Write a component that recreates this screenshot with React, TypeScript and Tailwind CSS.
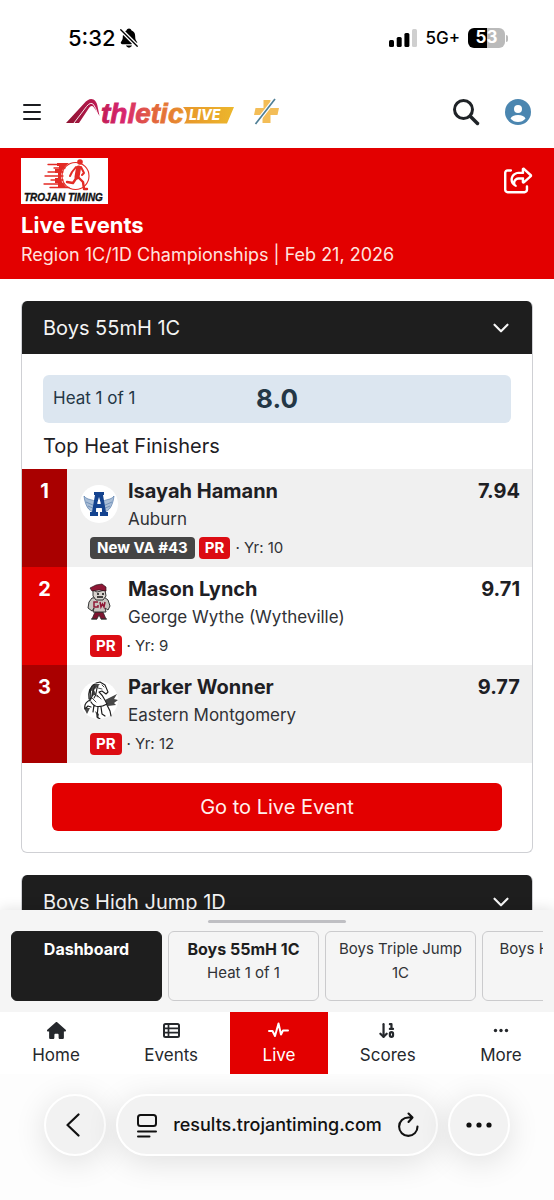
import React from 'react';
import { FaHouse, FaRegShareFromSquare } from 'react-icons/fa6';
import { IoNotificationsOff } from 'react-icons/io5';
import { ArrowDown10, ChevronDown } from 'lucide-react';

function StatusBar() {
  return (
    <div className="flex h-[76px] items-center justify-between pl-[68px] pr-[46px] text-black">
      <div className="flex items-center gap-[2px]">
        <span className="text-[22px] font-medium leading-7">5:32</span>
        <IoNotificationsOff size={22} />
      </div>
      <div className="flex items-center gap-2">
        <svg width="28" height="18" viewBox="0 0 28 18" aria-hidden="true">
          <rect x="0" y="11" width="5" height="7" rx="1.5" />
          <rect x="7.7" y="8" width="5" height="10" rx="1.5" />
          <rect x="15.4" y="4" width="5" height="14" rx="1.5" />
          <rect x="23" y="0" width="5" height="18" rx="1.5" fill="#cfcfcf" />
        </svg>
        <span className="text-[17px] font-medium leading-6">5G+</span>
        <div className="flex items-center gap-px">
          <div className="flex h-5 w-[37px] items-center justify-center rounded-md bg-linear-to-r from-black from-52% to-[#bababa] to-52% text-[17px] font-bold text-white">
            53
          </div>
          <div className="h-[7px] w-[2px] rounded-r-full bg-[#bababa]"></div>
        </div>
      </div>
    </div>
  );
}

function AthleticLogo() {
  return (
    <svg width="168" height="28" viewBox="0 0 168 28" role="img" aria-label="Athletic LIVE">
      <defs>
        <linearGradient id="brand" gradientUnits="userSpaceOnUse" x1="0" y1="0" x2="118" y2="0">
          <stop offset="0" stopColor="#8c1230" />
          <stop offset="0.28" stopColor="#c01c55" />
          <stop offset="0.5" stopColor="#d8276f" />
          <stop offset="0.72" stopColor="#e2603f" />
          <stop offset="1" stopColor="#e8932c" />
        </linearGradient>
        <linearGradient id="banner" x1="0" x2="1">
          <stop offset="0" stopColor="#e8962b" />
          <stop offset="1" stopColor="#ecb72c" />
        </linearGradient>
      </defs>
      <path d="M0 25 18 5.500Q23 -.5 27.500 1.500Q30.500 3 31.500 8L33.500 18 28 9.500Q25.500 6.500 23 10L13 25Z" fill="url(#brand)" />
      <path d="M8 25 20.500 8.500Q24.500 3.500 27.500 6.500Q29.500 9 32 17" fill="none" stroke="#fff" strokeWidth="0.9" />
      <path d="M117 9H168L161 25.500H118C122 21 122 14 117 9Z" fill="url(#banner)" />
      <text x="35" y="25" fontFamily="Liberation Sans, sans-serif" fontSize="28" fontWeight="700" fontStyle="italic" fill="url(#brand)" stroke="url(#brand)" strokeWidth="0.8">
        thletic
      </text>
      <text x="123" y="22" fontFamily="Inter, sans-serif" fontSize="14" fontWeight="800" fontStyle="italic" fill="#fff">
        LIVE
      </text>
    </svg>
  );
}

function PlusLogo() {
  return (
    <svg width="26" height="28" viewBox="0 0 26 28" aria-hidden="true">
      <path d="M9.500 2H16.500V10H25L23.500 17H16.500V25H8.500V17H0L1.500 10H9.500Z" fill="#f3bd57" />
      <path d="M1.500 26 21 1" stroke="#fff" strokeWidth="4" />
      <path d="M1.500 26 21 1" stroke="#4f7f96" strokeWidth="1.700" />
    </svg>
  );
}

function SiteHeader() {
  return (
    <header className="flex h-[72px] items-center pl-[23px] pr-[22px]">
      <button aria-label="Menu" className="flex w-[18px] flex-col gap-[5px]">
        <span className="h-[2px] w-full rounded-full bg-[#1b1c20]"></span>
        <span className="h-[2px] w-full rounded-full bg-[#1b1c20]"></span>
        <span className="h-[2px] w-full rounded-full bg-[#1b1c20]"></span>
      </button>
      <a href="#home" className="ml-[25px]">
        <AthleticLogo />
      </a>
      <a href="#plus" aria-label="Plus" className="ml-5">
        <PlusLogo />
      </a>
      <button aria-label="Search" className="ml-auto">
        <svg width="28" height="28" viewBox="0 0 28 28" fill="none" stroke="#1f2327" strokeLinecap="round" aria-hidden="true">
          <circle cx="11.500" cy="11.500" r="9" strokeWidth="3" />
          <path d="M18.500 18.500 25.500 25.500" strokeWidth="3.500" />
        </svg>
      </button>
      <button aria-label="Account" className="ml-6">
        <svg width="28" height="28" viewBox="0 0 28 28" aria-hidden="true">
          <circle cx="14" cy="14" r="13" fill="#4b86b0" />
          <circle cx="14" cy="11" r="4" fill="#fff" />
          <path d="M6.500 20.500Q8 17 14 17T21.500 20.500Q18.500 24 14 24T6.500 20.500Z" fill="#fff" />
        </svg>
      </button>
    </header>
  );
}

function TrojanLogo() {
  return (
    <svg width="87" height="46" viewBox="0 0 87 46" role="img" aria-label="Trojan Timing">
      <path d="M0 0H87V46H0Z" fill="#fff" />
      <g stroke="#e32b25" strokeLinecap="round" fill="none">
        <path d="M27 6.500H45M33 10H44M27 14H42M24 18H42M30 22H42M23 26H43M29 29.500H48" strokeWidth="1.300" />
        <circle cx="54.500" cy="18" r="13.500" strokeWidth="1.100" />
      </g>
      <path d="M36 5H48Q37 13 41 24L46 30H37V25H34V20H37V15H34V11H38V8H36Z" fill="#e32b25" />
      <g fill="none" stroke="#e32b25" strokeLinecap="round" strokeLinejoin="round">
        <path d="M57.500 10 56 19" strokeWidth="5" />
        <path d="M56 19 52 25 46 24M57 19 62 24 63 31H66" strokeWidth="2.400" />
        <path d="M55 9 51 14 49 18M60 9 63 15 61 17" strokeWidth="2" />
      </g>
      <circle cx="59" cy="4" r="2.800" fill="#e32b25" />
      <text x="3" y="43" fontFamily="Liberation Sans, sans-serif" fontSize="10" fontWeight="700" fontStyle="italic" fill="#111" stroke="#111" strokeWidth="0.3">
        TROJAN TIMING
      </text>
    </svg>
  );
}

function EventBanner() {
  return (
    <section className="flex items-start justify-between bg-[#e30000] px-[21px] pb-3 pt-[10px] text-white">
      <div>
        <TrojanLogo />
        <h1 className="mt-[7px] text-[22px] font-bold leading-7">Live Events</h1>
        <p className="mt-1 text-lg leading-6 text-[#ffe3df]">Region 1C/1D Championships | Feb 21, 2026</p>
      </div>
      <button aria-label="Share" className="mt-[8px]">
        <FaRegShareFromSquare size={29} />
      </button>
    </section>
  );
}

function AuburnLogo() {
  return (
    <svg width="38" height="38" viewBox="0 0 38 38" aria-hidden="true">
      <circle cx="19" cy="19" r="19" fill="#fff" />
      <g fill="#a9bdd6" stroke="#5a7fae" strokeWidth="0.7">
        <path d="M15 27C8 27 5 19 4 11C8 16 12 13 17 18Z" />
        <path d="M23 27C30 27 33 19 34 11C30 16 26 13 21 18Z" />
        <path d="M6 17 15 21M8 21 15 24M32 17 23 21M30 21 23 24" />
      </g>
      <path d="M14 7H24V10H23L26 27H28V31H20V27H22V23H16V27H18V31H10V27H12L15 10H14ZM17 19H21L19 12Z" fill="#14438f" />
    </svg>
  );
}

function WytheLogo() {
  return (
    <svg width="38" height="38" viewBox="0 0 38 38" aria-hidden="true">
      <path d="M15 29H23L26 36H21L19 32 17 36H12Z" fill="#7d1530" stroke="#222" strokeWidth="0.7" />
      <path d="M12 15 9 19 8 25 12 28 14 25 13 29H26L25 25 28 27 30 23 28 17 24 14Z" fill="#c9c5c0" stroke="#333" />
      <path d="M13 7 17 9 25 7 26 13 23 17H16L13 13Z" fill="#d8d3ce" stroke="#222" strokeWidth="0.900" />
      <path d="M10 5 16 2 22 1 26 4 26 8 19 7 12 8Z" fill="#8f1735" stroke="#2a1118" strokeWidth="0.700" />
      <path d="M17 11H19M22 11H24M17 14H23" stroke="#111" strokeWidth="1.300" />
      <path d="M18 19H14V24H18V22M20 19 21 24 22.500 21 24 24 25 19" fill="none" stroke="#8f1735" strokeWidth="1.500" />
      <path d="M11 36H17M21 36H27" stroke="#333" strokeWidth="1.200" />
    </svg>
  );
}

function EasternLogo() {
  return (
    <svg width="38" height="38" viewBox="0 0 38 38" aria-hidden="true">
      <circle cx="19" cy="19" r="19" fill="#fff" />
      <g fill="none" stroke="#1c1c1c" strokeLinecap="round" strokeLinejoin="round">
        <path d="M16 2 20 1 25 4 28 11 26 13 22 10 19 11C24 15 25 20 27 23M15 3C10 6 8 12 9 18M12 5C9 10 11 14 10 20M15 5C12 9 14 13 11 18M18 5C15 9 18 12 14 17" strokeWidth="1.100" />
        <path d="M10 19C6 21 4 24 5 28L8 25 11 26M11 21C14 26 20 27 27 23M14 24 13 31M18 26 17 36 20 38M21 26 22 33 25 35M27 24 30 30 31 35" strokeWidth="1.200" />
        <path d="M22 4 24 6M18 7 22 8M14 13 18 16M12 17 16 21M17 14 21 18" strokeWidth="0.800" />
      </g>
      <path d="M25 19 37 13 34 18 38 19 34 22 36 24 28 25ZM4 27 10 27 7 33ZM15 30 19 33 18 38ZM13 3 20 3 14 9 16 13 11 16 12 10 9 9Z" fill="#272727" fillOpacity="0.850" />
    </svg>
  );
}

const finishers = [
  { rank: 1, name: 'Isayah Hamann', school: 'Auburn', mark: '7.94', year: 10, badge: 'New VA #43', logo: <AuburnLogo /> },
  { rank: 2, name: 'Mason Lynch', school: 'George Wythe (Wytheville)', mark: '9.71', year: 9, badge: null, logo: <WytheLogo /> },
  { rank: 3, name: 'Parker Wonner', school: 'Eastern Montgomery', mark: '9.77', year: 12, badge: null, logo: <EasternLogo /> },
];

function Finishers() {
  return (
    <ol>
      {finishers.map((f) => (
        <li key={f.rank} className="flex odd:bg-[#f0f0f0] even:bg-white group">
          <div className="w-[45px] shrink-0 pt-2 text-center text-xl font-bold leading-7 text-white group-odd:bg-[#a90000] group-even:bg-[#e30000]">
            {f.rank}
          </div>
          <div className="flex-1 py-2 pl-[13px] pr-3">
            <div className="flex items-start gap-[10px]">
              <div className="mt-2">{f.logo}</div>
              <div className="flex-1">
                <p className="text-xl font-bold leading-7">{f.name}</p>
                <p className="text-[17px] leading-7 text-[#303236]">{f.school}</p>
              </div>
              <p className="text-xl font-bold leading-7">{f.mark}</p>
            </div>
            <div className="ml-[10px] mt-1 flex h-[22px] items-center text-[15px] text-[#303236]">
              {f.badge && (
                <span className="mr-1 rounded-sm bg-[#454545] px-[7px] text-[15px] font-bold leading-[22px] text-white">{f.badge}</span>
              )}
              <span className="rounded-sm bg-[#dc0c13] px-[6px] text-[15px] font-bold leading-[22px] text-white">PR</span>
              <span className="ml-[5px]">· Yr: {f.year}</span>
            </div>
          </div>
        </li>
      ))}
    </ol>
  );
}

function CardHeader({ title }: { title: string }) {
  return (
    <button className="flex h-[53px] w-full items-center justify-between bg-[#1e1e1e] pl-[21px] pr-[18px] text-left text-xl text-[#f4f4f4]">
      {title}
      <ChevronDown size={26} strokeWidth={2} />
    </button>
  );
}

const tabs = [
  { title: 'Boys 55mH 1C', detail: 'Heat 1 of 1', bold: true },
  { title: 'Boys Triple Jump', detail: '1C', bold: false },
  { title: 'Boys High Jump', detail: '1D', bold: false },
];

function EventTabs() {
  return (
    <section className="relative bg-[#f5f5f5] px-[11px] pb-[11px] pt-[10px] shadow-[0_-2px_12px_rgba(0,0,0,0.1)]">
      <div className="mx-auto h-[3px] w-[138px] rounded-full bg-[#bfbfc3]"></div>
      <div className="mt-2 flex h-[70px] gap-[6px] overflow-hidden leading-6 text-[#303236]">
        <button className="flex w-[151px] shrink-0 flex-col items-center rounded-md border border-[#1e1e1e] bg-[#1e1e1e] pt-[5px] font-bold text-white">
          Dashboard
        </button>
        {tabs.map((t) => (
          <button key={t.title} className="flex w-[151px] shrink-0 flex-col items-center rounded-md border border-[#cbcbcd] pt-[5px]">
            <span className={t.bold ? 'font-bold text-[#1e1e1e]' : 'whitespace-nowrap text-[15px]'}>{t.title}</span>
            <span className="text-[15px]">{t.detail}</span>
          </button>
        ))}
      </div>
    </section>
  );
}

function BottomNav() {
  const item = 'flex flex-auto flex-col items-center pt-[9px] text-[17px] leading-6';
  return (
    <nav className="relative flex h-[62px] bg-white text-[#25282c]">
      <a href="#home" className={item}>
        <FaHouse size={19} />
        <span className="mt-[3px]">Home</span>
      </a>
      <a href="#events" className={item}>
        <svg width="19" height="19" viewBox="0 0 19 19" fill="none" stroke="currentColor" strokeWidth="2" aria-hidden="true">
          <rect x="2" y="3" width="15" height="13" rx="1.500" />
          <path d="M2 7.300H17M2 11.700H17M6.500 3V16" strokeWidth="1.700" />
        </svg>
        <span className="mt-[3px]">Events</span>
      </a>
      <a href="#live" className={`${item} bg-[#e30000] text-white`}>
        <svg width="21" height="19" viewBox="0 0 21 19" fill="none" stroke="currentColor" strokeWidth="2" strokeLinejoin="round" strokeLinecap="round" aria-hidden="true">
          <path d="M1 10H4.500L7 15 10.500 2.500 13 13.500 15 9.500H20" />
        </svg>
        <span className="mt-[3px]">Live</span>
      </a>
      <a href="#scores" className={item}>
        <ArrowDown10 size={19} strokeWidth={2.800} />
        <span className="mt-[3px]">Scores</span>
      </a>
      <a href="#more" className={item}>
        <svg width="16" height="19" viewBox="0 0 16 19" fill="currentColor" aria-hidden="true">
          <circle cx="2.500" cy="9.500" r="1.700" />
          <circle cx="8" cy="9.500" r="1.700" />
          <circle cx="13.500" cy="9.500" r="1.700" />
        </svg>
        <span className="mt-[3px]">More</span>
      </a>
    </nav>
  );
}

function BrowserBar() {
  return (
    <div className="flex gap-[10px] bg-[#fdfdfd] px-11 pb-11 pt-5 text-[#111]">
      <button aria-label="Back" className="flex size-[62px] shrink-0 items-center justify-center rounded-full border-2 border-white bg-[#f2f2f2] pr-1 shadow-[0_6px_32px_rgba(0,0,0,0.12)]">
        <svg width="14" height="24" viewBox="0 0 14 24" fill="none" stroke="currentColor" strokeWidth="2.200" strokeLinecap="round" strokeLinejoin="round" aria-hidden="true">
          <path d="M12.500 1.500 1.500 12 12.500 22.500" />
        </svg>
      </button>
      <div className="flex h-[62px] flex-1 items-center justify-between rounded-full border-2 border-white bg-[#f2f2f2] pl-[18px] pr-4 shadow-[0_6px_32px_rgba(0,0,0,0.12)]">
        <button aria-label="Page options">
          <svg width="22" height="25" viewBox="0 0 22 25" fill="none" stroke="currentColor" strokeWidth="2" strokeLinecap="round" aria-hidden="true">
            <rect x="2" y="2" width="18" height="11" rx="2.500" />
            <path d="M2 18.500H20M2 23.500H13.500" />
          </svg>
        </button>
        <a href="#address" className="text-lg font-medium leading-6">results.trojantiming.com</a>
        <button aria-label="Reload">
          <svg width="23" height="26" viewBox="0 0 23 26" fill="none" stroke="currentColor" strokeWidth="2.100" strokeLinecap="round" strokeLinejoin="round" aria-hidden="true">
            <path d="M20.500 14.500A9.200 9.200 0 1 1 11.500 5.500H15M11.500 1.500 15.500 5.500 11.500 10" />
          </svg>
        </button>
      </div>
      <button aria-label="More options" className="flex size-[62px] shrink-0 items-center justify-center rounded-full border-2 border-white bg-[#f2f2f2] shadow-[0_6px_32px_rgba(0,0,0,0.12)]">
        <svg width="26" height="6" viewBox="0 0 26 6" fill="currentColor" aria-hidden="true">
          <circle cx="3" cy="3" r="2.600" />
          <circle cx="13" cy="3" r="2.600" />
          <circle cx="23" cy="3" r="2.600" />
        </svg>
      </button>
    </div>
  );
}

export default function App() {
  return (
    <div className="flex h-screen flex-col overflow-hidden bg-white font-['Inter',sans-serif] text-[#1e2024]">
      <StatusBar />
      <SiteHeader />
      <EventBanner />
      <main className="min-h-0 flex-1 overflow-hidden px-[21px] pt-[22px]">
        <article className="overflow-hidden rounded-md border border-[#cfd0d4] border-t-0 bg-white">
          <CardHeader title="Boys 55mH 1C" />
          <div className="mx-[21px] mt-[21px] grid h-12 grid-cols-[1fr_auto_1fr] items-center rounded-md bg-[#dce6f0] px-[10px] text-[#243746]">
            <span className="text-[17px]">Heat 1 of 1</span>
            <span className="text-[26px] font-bold leading-8">8.0</span>
          </div>
          <h2 className="ml-[21px] mt-2 pb-2 text-xl leading-[30px]">Top Heat Finishers</h2>
          <Finishers />
          <div className="px-[30px] pb-[21px] pt-5">
            <button className="h-12 w-full rounded-md bg-[#e30000] text-xl text-[#fff0ed]">Go to Live Event</button>
          </div>
        </article>
        <article className="mt-[22px] overflow-hidden rounded-md border border-[#cfd0d4] border-t-0">
          <CardHeader title="Boys High Jump 1D" />
        </article>
      </main>
      <EventTabs />
      <BottomNav />
      <BrowserBar />
    </div>
  );
}
